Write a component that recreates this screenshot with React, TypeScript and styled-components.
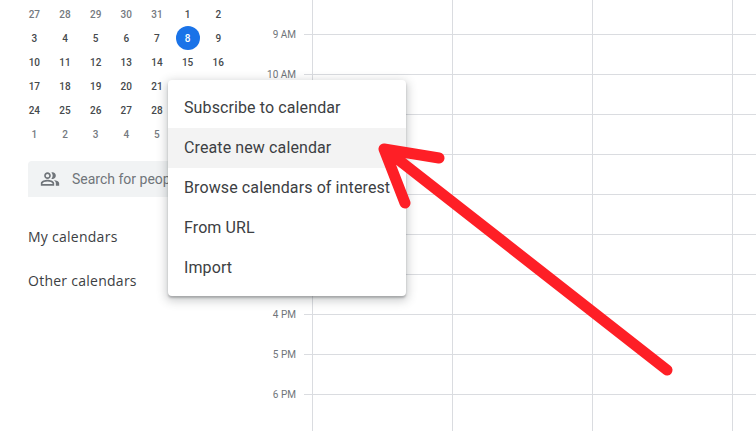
import React from "react";
import styled, { createGlobalStyle } from "styled-components";
import { MdOutlinePeopleAlt } from "react-icons/md";

const Global = createGlobalStyle`
  html, body { margin: 0; padding: 0; background: #fff; overflow: hidden; }
  body { font-family: Roboto, "Liberation Sans", sans-serif; }
`;

const Page = styled.div`
  position: relative;
  display: flex;
  width: 756px;
  height: 431px;
  overflow: hidden;
  background: #fff;
`;

const Sidebar = styled.aside`
  flex: 0 0 254px;
  display: flex;
  flex-direction: column;
  padding-top: 2px;
  box-sizing: border-box;
`;

const MiniCalendar = styled.div`
  display: grid;
  grid-template-columns: repeat(7, 30.67px);
  grid-auto-rows: 24px;
  margin-left: 19px;
`;

const Day = styled.div<{ $muted?: boolean; $today?: boolean }>`
  display: flex;
  align-items: center;
  justify-content: center;
  font-size: 10px;
  font-weight: 500;
  color: ${(p) => (p.$today ? "#fff" : p.$muted ? "#757a7f" : "#45494c")};
  span {
    display: flex;
    align-items: center;
    justify-content: center;
    width: 24px;
    height: 24px;
    border-radius: 50%;
    background: ${(p) => (p.$today ? "#1a73e8" : "transparent")};
  }
`;

const SearchBar = styled.div`
  display: flex;
  align-items: center;
  height: 36px;
  width: 140px;
  margin: 15px 0 18px 28px;
  padding-left: 12px;
  box-sizing: border-box;
  background: #f1f3f4;
  border-radius: 4px 0 0 0;
  color: #70757a;
  font-size: 14px;
  white-space: nowrap;
  overflow: hidden;
  svg { flex: none; margin-right: 12px; }
`;

const SectionTitle = styled.div`
  height: 44px;
  display: flex;
  align-items: center;
  margin-left: 28px;
  padding-bottom: 2px;
  box-sizing: border-box;
  font-family: "Open Sans", sans-serif;
  font-size: 14px;
  font-weight: 500;
  letter-spacing: 0.26px;
  color: #3c4043;
`;

const Gutter = styled.div`
  flex: 0 0 58px;
  padding-top: 14px;
  display: flex;
  flex-direction: column;
`;

const HourRow = styled.div`
  flex: 0 0 40px;
  display: flex;
  align-items: center;
  justify-content: flex-end;
  font-size: 10px;
  color: #70757a;
  &::after {
    content: "";
    width: 8px;
    height: 1px;
    margin-left: 8px;
    background: #dadce0;
  }
`;

const DayColumn = styled.div`
  flex: 0 0 140px;
  box-sizing: border-box;
  border-left: 1px solid #dadce0;
  display: flex;
  flex-direction: column;
`;

const Slot = styled.div`
  flex: 0 0 40px;
  box-sizing: border-box;
  border-bottom: 1px solid #dadce0;
  &:first-child { flex-basis: 35px; }
`;

const Menu = styled.div`
  position: absolute;
  left: 168px;
  top: 80px;
  width: 238px;
  padding: 8px 0;
  background: #fff;
  border-radius: 4px;
  box-shadow: 0 2px 2px rgba(60, 64, 67, 0.3), 0 3px 10px 2px rgba(60, 64, 67, 0.25);
`;

const MenuItem = styled.div<{ $active?: boolean }>`
  height: 40px;
  display: flex;
  align-items: center;
  padding: 0 0 2px 16px;
  box-sizing: border-box;
  font-size: 16px;
  font-weight: 400;
  letter-spacing: 0.11px;
  color: #3c4043;
  white-space: nowrap;
  background: ${(p) => (p.$active ? "#f3f3f3" : "transparent")};
`;

const Arrow = styled.svg`
  position: absolute;
  left: 0;
  top: 0;
  pointer-events: none;
`;

const weeks: [string, boolean][][] = [
  [["27", true], ["28", true], ["29", true], ["30", true], ["31", true], ["1", false], ["2", false]],
  [["3", false], ["4", false], ["5", false], ["6", false], ["7", false], ["8", false], ["9", false]],
  [["10", false], ["11", false], ["12", false], ["13", false], ["14", false], ["15", false], ["16", false]],
  [["17", false], ["18", false], ["19", false], ["20", false], ["21", false], ["", false], ["", false]],
  [["24", false], ["25", false], ["26", false], ["27", false], ["28", false], ["", false], ["", false]],
  [["1", true], ["2", true], ["3", true], ["4", true], ["5", true], ["", true], ["", true]],
];

const hours = ["9 AM", "10 AM", "", "", "", "", "", "4 PM", "5 PM", "6 PM", ""];
const menuItems = [
  "Subscribe to calendar",
  "Create new calendar",
  "Browse calendars of interest",
  "From URL",
  "Import",
];

export default function App() {
  return (
    <Page>
      <Global />
      <Sidebar>
        <MiniCalendar>
          {weeks.flat().map(([d, muted], i) => (
            <Day key={i} $muted={muted} $today={i === 12}>
              <span>{d}</span>
            </Day>
          ))}
        </MiniCalendar>
        <SearchBar>
          <MdOutlinePeopleAlt size={20} />
          Search for people
        </SearchBar>
        <SectionTitle>My calendars</SectionTitle>
        <SectionTitle>Other calendars</SectionTitle>
      </Sidebar>
      <Gutter>
        {hours.map((h, i) => (
          <HourRow key={i}>{h}</HourRow>
        ))}
      </Gutter>
      {[0, 1, 2, 3].map((c) => (
        <DayColumn key={c}>
          {hours.concat("").map((_, i) => (
            <Slot key={i} />
          ))}
        </DayColumn>
      ))}
      <Menu>
        {menuItems.map((m, i) => (
          <MenuItem key={m} $active={i === 1}>
            {m}
          </MenuItem>
        ))}
      </Menu>
      <Arrow width="756" height="431" viewBox="0 0 756 431" fill="none">
        <path
          d="M667 370L386 150M439 158L384 149L405 203"
          stroke="#fe1f26"
          strokeWidth="11"
          strokeLinecap="round"
          strokeLinejoin="round"
        />
      </Arrow>
    </Page>
  );
}
